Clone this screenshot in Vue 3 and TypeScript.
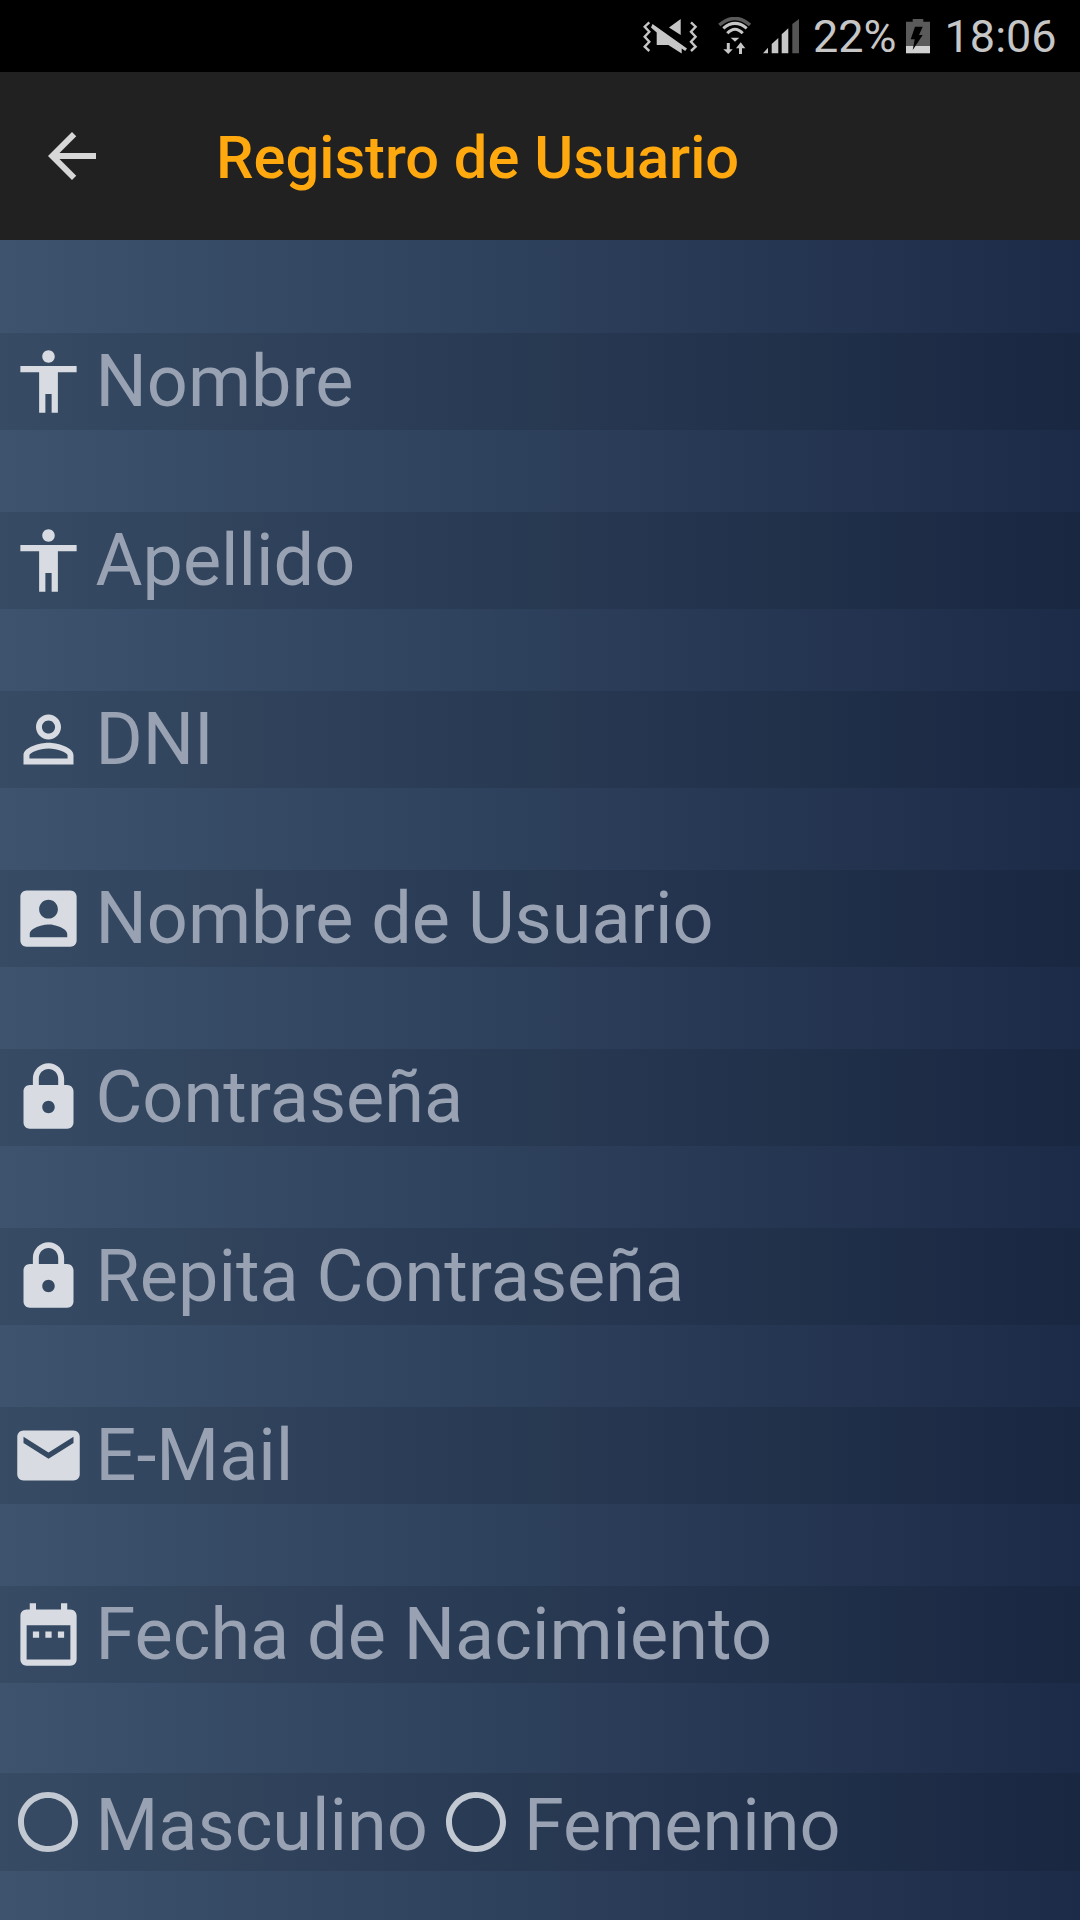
<script setup lang="ts">
interface Field {
  label: string
  icon: string
}

const accessibility = 'M12 2c1.1 0 2 .9 2 2s-.9 2-2 2-2-.9-2-2 .9-2 2-2zm9 7h-6v13h-2v-6h-2v6H9V9H3V7h18v2z'
const lock = 'M18 8h-1V6c0-2.76-2.24-5-5-5S7 3.24 7 6v2H6c-1.1 0-2 .9-2 2v10c0 1.1.9 2 2 2h12c1.1 0 2-.9 2-2V10c0-1.1-.9-2-2-2zm-6 9c-1.1 0-2-.9-2-2s.9-2 2-2 2 .9 2 2-.9 2-2 2zm3.1-9H8.9V6c0-1.71 1.39-3.1 3.1-3.1 1.71 0 3.1 1.39 3.1 3.1v2z'
const radio = 'M12 2C6.48 2 2 6.48 2 12s4.48 10 10 10 10-4.48 10-10S17.52 2 12 2zm0 18c-4.42 0-8-3.58-8-8s3.58-8 8-8 8 3.58 8 8-3.58 8-8 8z'

const fields: Field[] = [
  { label: 'Nombre', icon: accessibility },
  { label: 'Apellido', icon: accessibility },
  { label: 'DNI', icon: 'M12 5.9c1.16 0 2.1.94 2.1 2.1s-.94 2.1-2.1 2.1S9.9 9.16 9.9 8s.94-2.1 2.1-2.1m0 9c2.97 0 6.1 1.46 6.1 2.1v1.1H5.9V17c0-.64 3.13-2.1 6.1-2.1M12 4C9.79 4 8 5.79 8 8s1.79 4 4 4 4-1.79 4-4-1.79-4-4-4zm0 9c-2.67 0-8 1.34-8 4v3h16v-3c0-2.66-5.33-4-8-4z' },
  { label: 'Nombre de Usuario', icon: 'M3 5v14c0 1.1.89 2 2 2h14c1.1 0 2-.9 2-2V5c0-1.1-.9-2-2-2H5c-1.11 0-2 .9-2 2zm12 4c0 1.66-1.34 3-3 3s-3-1.34-3-3 1.34-3 3-3 3 1.34 3 3zm-9 8c0-2 4-3.1 6-3.1s6 1.1 6 3.1v1H6v-1z' },
  { label: 'Contraseña', icon: lock },
  { label: 'Repita Contraseña', icon: lock },
  { label: 'E-Mail', icon: 'M20 4H4c-1.1 0-1.99.9-1.99 2L2 18c0 1.1.9 2 2 2h16c1.1 0 2-.9 2-2V6c0-1.1-.9-2-2-2zm0 4l-8 5-8-5V6l8 5 8-5v2z' },
  { label: 'Fecha de Nacimiento', icon: 'M9 11H7v2h2v-2zm4 0h-2v2h2v-2zm4 0h-2v2h2v-2zm2-7h-1V2h-2v2H8V2H6v2H5c-1.11 0-1.99.9-1.99 2L3 20c0 1.1.89 2 2 2h14c1.1 0 2-.9 2-2V6c0-1.1-.9-2-2-2zm0 16H5V9h14v11z' }
]

const genders: string[] = ['Masculino', 'Femenino']
</script>

<template>
  <div class="screen">
    <div class="status-bar">
      <svg class="st-mute" width="56" height="36" viewBox="0 0 56 36">
        <polyline class="zig" points="7.3,3.3 2.7,7.7 7.3,12.7 2.7,17.7 7.3,22.7 2.7,27.7 7.3,32" />
        <polyline class="zig" points="49,3.3 53.6,7.7 49,12.7 53.6,17.7 49,22.7 53.6,27.7 49,32" />
        <path fill="#c6c6c6" d="M38.7 0v16L27 8.5zM10.5 5l34.5 24.5-1.8 2.5-3.5-2.5v5L26.3 26H14.7V13.5L9 8.5z" />
      </svg>
      <svg class="st-wifi" width="34" height="38" viewBox="0 0 34 38" fill="none">
        <path stroke="#5a5a5a" stroke-width="3.5" d="M1.3 8Q17-5 32 8" />
        <path stroke="#c6c6c6" stroke-width="3" d="M5.3 11.3Q17 1.5 28.7 11.3M9.3 16.3Q17 8 24.7 16.3" />
        <path fill="#c6c6c6" d="M12.7 20.7h8.6L17 24.7zM8.8 26h3v6.3h2.9L10.3 37 5.3 32.3h3.5zM18 31.3l4.7-6 4.6 6h-3.3V37h-3v-5.7z" />
      </svg>
      <svg class="st-signal" width="36" height="35" viewBox="0 0 36 35">
        <path fill="#c6c6c6" d="M0 34.3L5 28.7v5.6zM8.7 25l6.6-6v15.3H8.7zM18.7 15.3L25.3 9.3v25h-6.6z" />
        <path fill="#555" d="M29.3 5l6.7-5v34.3h-6.7z" />
      </svg>
      <span class="st-text st-pct">22%</span>
      <svg class="st-batt" width="24" height="35" viewBox="0 0 24 35">
        <path fill="#5a5a5a" d="M6.7 0h10.6v2.7H24V27H0V2.7h6.7z" />
        <rect y="27" width="24" height="7.3" fill="#d0d0d0" />
        <path fill="#000" d="M9 7.7h7.7L13 16h3.7L6.7 31l2-10.7h-4z" />
      </svg>
      <span class="st-text st-time">18:06</span>
    </div>

    <header class="toolbar">
      <svg class="back" width="72" height="72" viewBox="0 0 24 24">
        <path d="M20 11H7.83l5.59-5.59L12 4l-8 8 8 8 1.41-1.41L7.83 13H20v-2z" />
      </svg>
      <h1 class="title">Registro de Usuario</h1>
    </header>

    <main class="form">
      <div v-for="f in fields" :key="f.label" class="row">
        <svg class="icon" viewBox="0 0 24 24"><path :d="f.icon" /></svg>
        <span class="label">{{ f.label }}</span>
      </div>
      <div class="row row-gender">
        <div v-for="g in genders" :key="g" class="gender">
          <svg class="icon radio" viewBox="0 0 24 24"><path :d="radio" /></svg>
          <span class="label">{{ g }}</span>
        </div>
      </div>
    </main>
  </div>
</template>

<style scoped>
.screen {
  width: 1080px;
  height: 1920px;
  display: flex;
  flex-direction: column;
  overflow: hidden;
  font-family: Roboto, "Liberation Sans", sans-serif;
}

.status-bar {
  height: 72px;
  flex: none;
  background: #000;
  display: flex;
  align-items: flex-start;
  padding-left: 642px;
  box-sizing: border-box;
}
.status-bar svg {
  flex: none;
  margin-top: 19px;
}
.zig {
  fill: none;
  stroke: #c6c6c6;
  stroke-width: 2.4;
}
.st-wifi {
  margin-left: 20px;
  margin-top: 17px !important;
}
.st-signal {
  margin-left: 11px;
}
.st-text {
  color: #c6c6c6;
  font-size: 45px;
  line-height: 72px;
  margin-top: 1px;
}
.st-pct {
  margin-left: 14px;
}
.st-batt {
  margin-left: 9px;
}
.st-time {
  margin-left: 15px;
}

.toolbar {
  height: 168px;
  flex: none;
  background: #212121;
  display: flex;
  align-items: center;
  padding-left: 36px;
  box-sizing: border-box;
}
.back {
  fill: #d7d7d7;
  flex: none;
}
.title {
  margin: 4px 0 0 108px;
  font-size: 59.6px;
  font-weight: 500;
  color: #ffa90f;
}

.form {
  flex: 1;
  padding-top: 93px;
  background: linear-gradient(to right, #3d536e, #1c2b48);
}
.row {
  height: 97px;
  margin-bottom: 82px;
  background: rgba(0, 0, 0, 0.09);
  display: flex;
  align-items: center;
  padding-left: 10.5px;
}
.row-gender {
  height: 98px;
  margin-top: 90px;
  margin-bottom: 0;
}
.row:nth-last-child(2) {
  margin-bottom: 0;
}
.gender {
  display: flex;
  align-items: center;
}
.icon {
  width: 75px;
  height: 75px;
  flex: none;
  fill: #d8dce2;
}
.radio {
  width: 72px;
  height: 72px;
  margin: 0 2px 0 1px;
  fill: #c3c9d2;
}
.label {
  margin-left: 10px;
  margin-top: -1px;
  font-size: 72px;
  line-height: 97px;
  color: #98a2b2;
}
.gender .label {
  margin-top: 7px;
  margin-right: 11px;
}
</style>

<style>
html,
body {
  margin: 0;
  background: #000;
}
</style>
